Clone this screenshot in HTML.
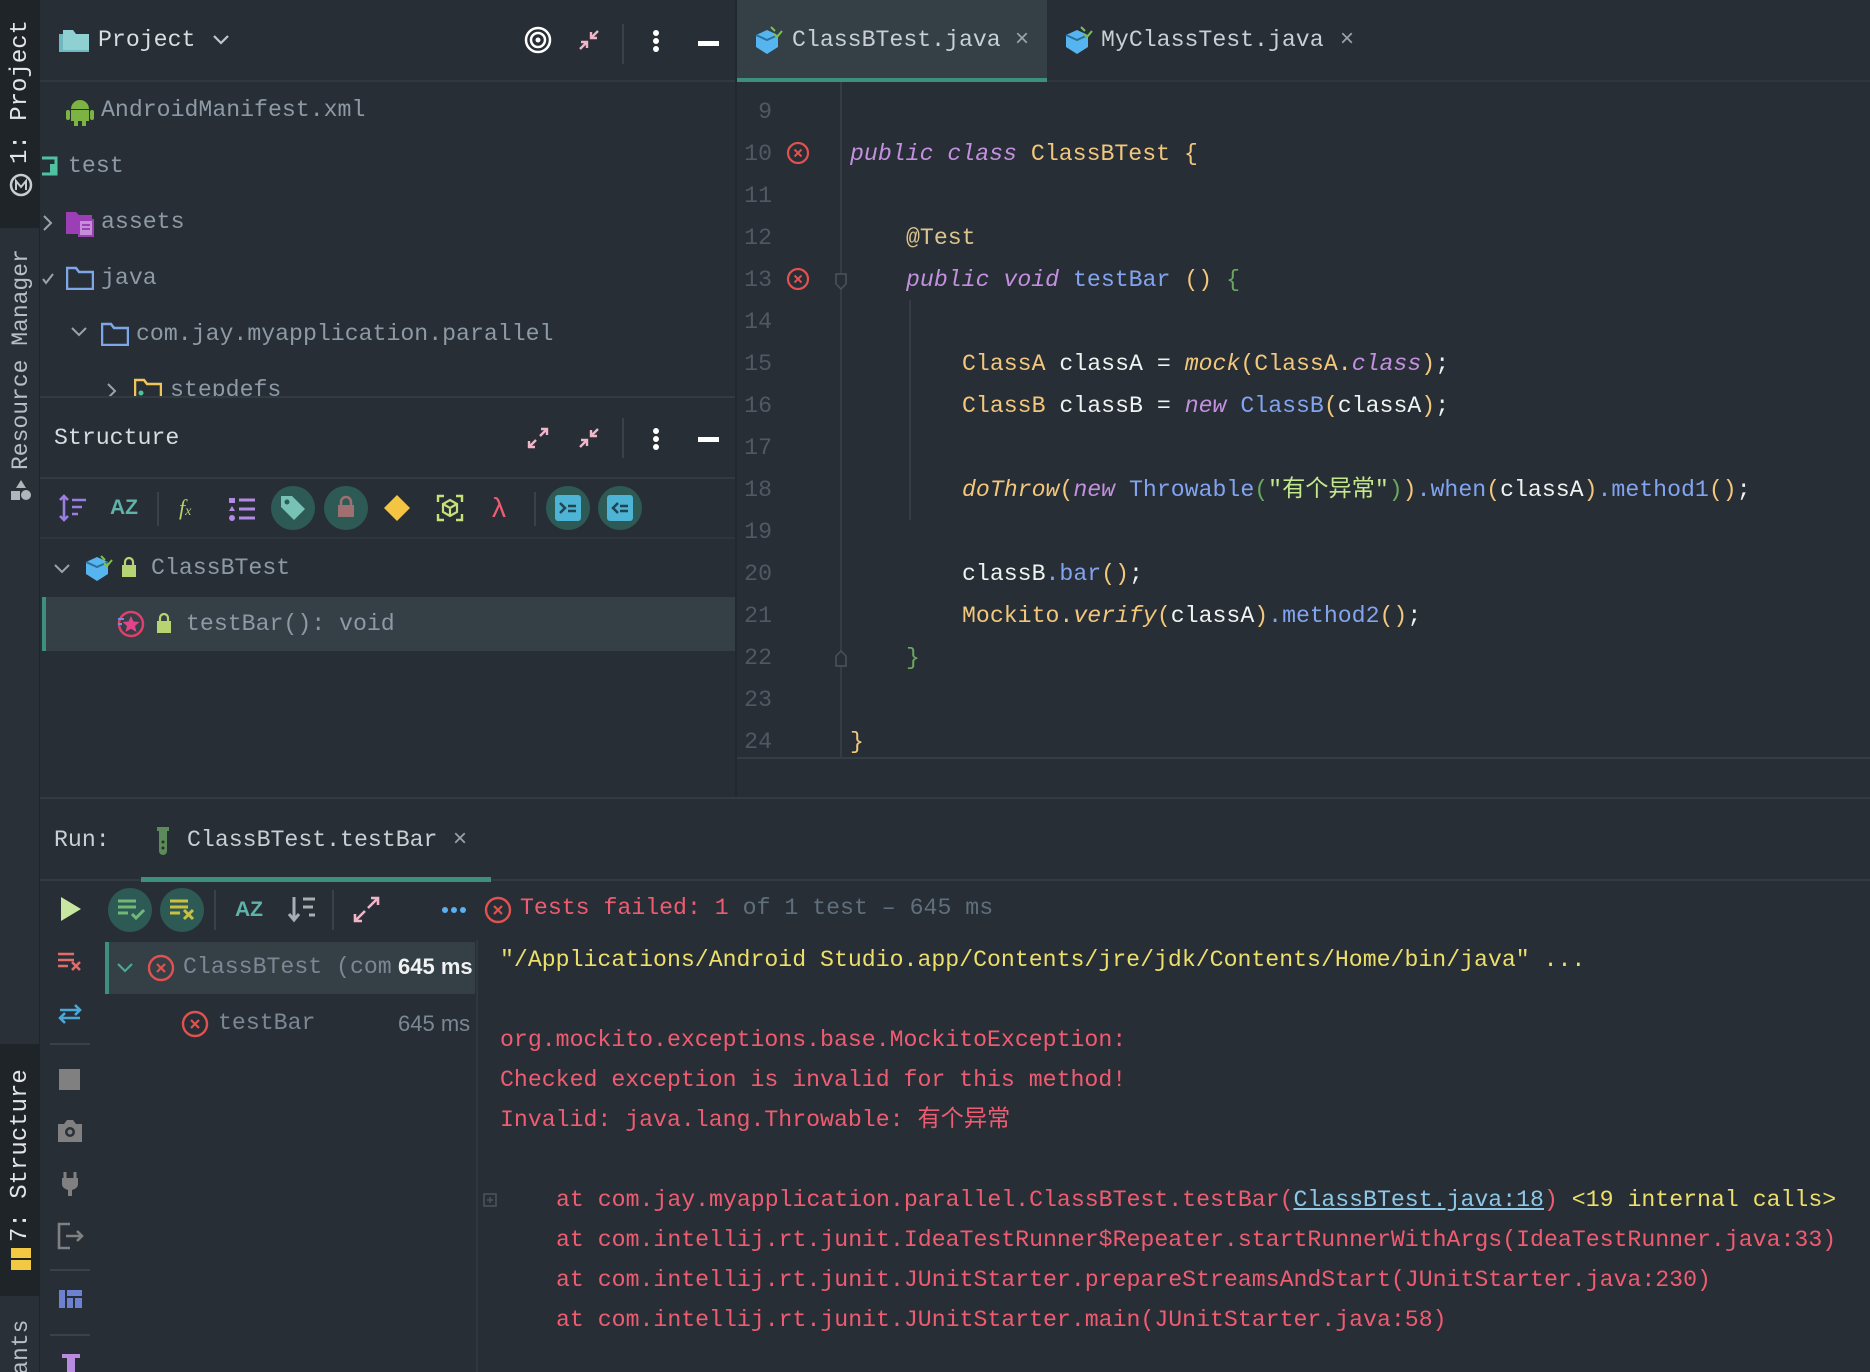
<!DOCTYPE html>
<html style="overflow:hidden;width:1870px;height:1372px"><head><meta charset="utf-8">
<style>
*{margin:0;padding:0;box-sizing:border-box}
body{width:1870px;height:1372px;background:#282e35;overflow:hidden;position:relative;font-family:"Liberation Mono","Noto Sans CJK SC",monospace;font-size:23.2px;color:#8d9aa5}
.a{position:absolute;white-space:pre;line-height:1}
.c{letter-spacing:0}
.vt{position:absolute;writing-mode:vertical-rl;transform:rotate(180deg);font-family:"Liberation Mono",monospace;font-size:23px;color:#c8cdd2;white-space:pre}
.ln{position:absolute;left:740px;width:32px;text-align:right;color:#4f5964;line-height:1}
.k{color:#c390e0;font-style:italic}
.y{color:#f2c77c}
.b{color:#82a4f0}
.w{color:#eef2f0}
.g{color:#6aa860}
.s{color:#c3e88d}
.r{color:#ef5c72}
.cy{color:#ecdf6a}
.gr{color:#5f6f7c}
</style></head><body>

<!-- left strip -->
<div style="position:absolute;left:0;top:0;width:40px;height:1372px;background:#2a3038;border-right:1px solid #20252b"></div>
<div style="position:absolute;left:0;top:0;width:40px;height:228px;background:#1f2429"></div>
<div class="vt" style="left:7px;top:18px;height:146px;font-size:24px;color:#e2e6ea">1: Project</div>
<svg class="a" style="left:8px;top:172px" width="26" height="26"><circle cx="13" cy="13" r="10" fill="none" stroke="#c8cdd2" stroke-width="2.5"/><path d="M8 18V9l5 6 5-6v9" fill="none" stroke="#c8cdd2" stroke-width="2"/></svg>
<div class="vt" style="left:8px;top:244px;height:226px;color:#b7bec5">Resource Manager</div>
<svg class="a" style="left:9px;top:478px" width="24" height="24"><path d="M12 2l5 8H7z" fill="#b0b6bc"/><rect x="2" y="13" width="9" height="9" fill="#b0b6bc"/><circle cx="17" cy="17" r="5" fill="#b0b6bc"/></svg>
<div style="position:absolute;left:0;top:1044px;width:40px;height:252px;background:#1f2429"></div>
<div class="vt" style="left:7px;top:1066px;height:176px;font-size:24px;color:#e2e6ea">7: Structure</div>
<div style="position:absolute;left:11px;top:1248px;width:20px;height:10px;background:#f3c842"></div>
<div style="position:absolute;left:11px;top:1260px;width:20px;height:10px;background:#f3c842"></div>
<div style="position:absolute;left:0;top:1310px;width:40px;height:62px;overflow:hidden">
<div class="vt" style="left:8px;top:8px;height:112px;color:#b7bec5">Variants</div></div>

<!-- project header -->
<div style="position:absolute;left:40px;top:80px;width:696px;height:2px;background:#303840"></div>
<svg class="a" style="left:57px;top:26px" width="34" height="28"><path d="M2 8h30v18H2z" fill="#6fb8bd"/><path d="M6 4h10l3 4h13v16H6z" fill="#8fd0d2"/></svg>
<div class="a" style="left:98px;top:29px;color:#d8dde2">Project</div>
<svg class="a" style="left:212px;top:34px" width="18" height="12"><path d="M2 2l7 7 7-7" fill="none" stroke="#c0c6cc" stroke-width="2.2"/></svg>
<svg class="a" style="left:524px;top:26px" width="28" height="28"><circle cx="14" cy="14" r="12" fill="none" stroke="#fff" stroke-width="2.5"/><circle cx="14" cy="14" r="7" fill="none" stroke="#fff" stroke-width="2.5"/><circle cx="14" cy="14" r="2.5" fill="#fff"/></svg>
<svg class="a" style="left:577px;top:28px" width="24" height="24"><path d="M14 10l7-7M14 4v6h6M10 14l-7 7M4 14h6v6" fill="none" stroke="#f0b5c8" stroke-width="2.4"/></svg>
<div style="position:absolute;left:622px;top:24px;width:2px;height:40px;background:#3a4249"></div>
<div style="position:absolute;left:653px;top:30px;width:6px;height:6px;border-radius:3px;background:#fff;box-shadow:0 8px 0 #fff,0 16px 0 #fff"></div>
<div style="position:absolute;left:698px;top:41px;width:21px;height:5px;background:#fff"></div>

<!-- project tree -->
<svg class="a" style="left:66px;top:96px" width="28" height="30"><path d="M5 13a9 9 0 0 1 18 0z" fill="#7cb342"/><rect x="5" y="14" width="18" height="11" fill="#7cb342"/><rect x="0" y="14" width="4" height="10" rx="2" fill="#7cb342"/><rect x="24" y="14" width="4" height="10" rx="2" fill="#7cb342"/><rect x="8" y="24" width="4" height="6" fill="#7cb342"/><rect x="16" y="24" width="4" height="6" fill="#7cb342"/></svg>
<div class="a" style="left:101px;top:99px">AndroidManifest.xml</div>
<svg class="a" style="left:40px;top:154px" width="20" height="26"><path d="M2 4h14v16H2" fill="none" stroke="#4fc3a1" stroke-width="3"/><rect x="10" y="10" width="6" height="10" fill="#4fc3a1"/></svg>
<div class="a" style="left:68px;top:155px">test</div>
<svg class="a" style="left:42px;top:214px" width="12" height="18"><path d="M2 2l7 7-7 7" fill="none" stroke="#9aa4ad" stroke-width="2"/></svg>
<svg class="a" style="left:66px;top:210px" width="30" height="28"><path d="M0 2h10l3 3h13v19H0z" fill="#9c3fb6"/><rect x="13" y="10" width="14" height="16" fill="#c58fd8" stroke="#9c3fb6" stroke-width="2"/><path d="M16 15h8M16 19h8" stroke="#9c3fb6" stroke-width="2"/></svg>
<div class="a" style="left:101px;top:211px">assets</div>
<svg class="a" style="left:41px;top:272px" width="14" height="14"><path d="M2 7l3 4 7-9" fill="none" stroke="#9aa4ad" stroke-width="2"/></svg>
<svg class="a" style="left:66px;top:266px" width="28" height="24"><path d="M1 2h9l3 4h14v17H1z" fill="none" stroke="#7ea7e8" stroke-width="2.5"/></svg>
<div class="a" style="left:101px;top:267px">java</div>
<svg class="a" style="left:70px;top:326px" width="18" height="12"><path d="M2 2l7 7 7-7" fill="none" stroke="#9aa4ad" stroke-width="2"/></svg>
<svg class="a" style="left:101px;top:322px" width="28" height="24"><path d="M1 2h9l3 4h14v17H1z" fill="none" stroke="#7ea7e8" stroke-width="2.5"/></svg>
<div class="a" style="left:136px;top:323px">com.jay.myapplication.parallel</div>
<div style="position:absolute;left:40px;top:370px;width:696px;height:27px;overflow:hidden">
<svg class="a" style="left:66px;top:12px" width="12" height="18"><path d="M2 2l7 7-7 7" fill="none" stroke="#9aa4ad" stroke-width="2"/></svg>
<svg class="a" style="left:94px;top:8px" width="28" height="24"><path d="M1 2h9l3 4h14v17H1z" fill="none" stroke="#f3c45a" stroke-width="2.5"/><circle cx="7" cy="15" r="2.5" fill="#4fc3a1"/></svg>
<div class="a" style="left:130px;top:9px">stepdefs</div>
</div>
<div style="position:absolute;left:40px;top:396px;width:696px;height:2px;background:#323a42"></div>

<!-- structure header -->
<div class="a" style="left:54px;top:427px;color:#d8dde2">Structure</div>
<svg class="a" style="left:526px;top:426px" width="24" height="24"><path d="M14 10l7-7M15 3h6v6M10 14l-7 7M3 15v6h6" fill="none" stroke="#f0b5c8" stroke-width="2.4"/></svg>
<svg class="a" style="left:577px;top:426px" width="24" height="24"><path d="M14 10l7-7M14 4v6h6M10 14l-7 7M4 14h6v6" fill="none" stroke="#f0b5c8" stroke-width="2.4"/></svg>
<div style="position:absolute;left:622px;top:418px;width:2px;height:40px;background:#3a4249"></div>
<div style="position:absolute;left:653px;top:428px;width:6px;height:6px;border-radius:3px;background:#fff;box-shadow:0 8px 0 #fff,0 16px 0 #fff"></div>
<div style="position:absolute;left:698px;top:437px;width:21px;height:5px;background:#fff"></div>
<div style="position:absolute;left:40px;top:477px;width:696px;height:2px;background:#323a42"></div>

<!-- structure toolbar -->
<svg class="a" style="left:58px;top:494px" width="30" height="28"><path d="M6 2v24M2 6l4-4 4 4M2 22l4 4 4-4M14 6h14M14 13h10M14 20h6" fill="none" stroke="#9a7ee0" stroke-width="2.6"/></svg>
<div class="a" style="left:110px;top:497px;color:#5fb3a8;font-family:'Liberation Sans',sans-serif;font-weight:bold;font-size:21px">AZ</div>
<div style="position:absolute;left:157px;top:492px;width:2px;height:34px;background:#3a4249"></div>
<div class="a" style="left:179px;top:497px;color:#b9cf6a;font-style:italic;font-family:'Liberation Serif',serif;font-size:22px">f<span style="font-size:14px">x</span></div>
<svg class="a" style="left:228px;top:496px" width="28" height="26"><rect x="1" y="2" width="6" height="5" fill="#b28ae6"/><path d="M4 10l3 5H1z" fill="#b28ae6"/><circle cx="4" cy="22" r="3" fill="#b28ae6"/><path d="M11 4h16M11 13h16M11 22h16" stroke="#b28ae6" stroke-width="3"/></svg>
<div style="position:absolute;left:271px;top:486px;width:44px;height:44px;border-radius:22px;background:#2e5a55"></div>
<svg class="a" style="left:279px;top:494px" width="28" height="28"><path d="M2 2h11l13 13-11 11L2 13z" fill="#77c2b5"/><circle cx="8" cy="8" r="2.5" fill="#2e5a55"/></svg>
<div style="position:absolute;left:324px;top:486px;width:44px;height:44px;border-radius:22px;background:#2e5a55"></div>
<svg class="a" style="left:336px;top:495px" width="20" height="24"><path d="M5 10V7a5 5 0 0 1 10 0v3" fill="none" stroke="#a07070" stroke-width="2.5"/><rect x="2" y="10" width="16" height="12" fill="#a07070"/></svg>
<svg class="a" style="left:383px;top:494px" width="28" height="28"><path d="M14 1l13 13-13 13L1 14z" fill="#f4c542"/></svg>
<svg class="a" style="left:436px;top:494px" width="28" height="28"><path d="M2 8V2h6M20 2h6v6M26 20v6h-6M8 26H2v-6" fill="none" stroke="#c6e07a" stroke-width="2.4"/><path d="M14 6l7 4v8l-7 4-7-4v-8z M7 10l7 4 7-4M14 14v8" fill="none" stroke="#c6e07a" stroke-width="2.2"/></svg>
<div class="a" style="left:492px;top:494px;color:#ef5c72;font-family:'Liberation Sans',sans-serif;font-size:28px">λ</div>
<div style="position:absolute;left:534px;top:492px;width:2px;height:34px;background:#3a4249"></div>
<div style="position:absolute;left:546px;top:486px;width:44px;height:44px;border-radius:22px;background:#2e5a55"></div>
<svg class="a" style="left:555px;top:495px" width="26" height="26"><rect width="26" height="26" rx="3" fill="#4db4d6"/><path d="M5 8l5 5-5 5M13 11h8M13 16h8" fill="none" stroke="#1e4550" stroke-width="2.5"/></svg>
<div style="position:absolute;left:598px;top:486px;width:44px;height:44px;border-radius:22px;background:#2e5a55"></div>
<svg class="a" style="left:607px;top:495px" width="26" height="26"><rect width="26" height="26" rx="3" fill="#4db4d6"/><path d="M11 8l-5 5 5 5M13 11h8M13 16h8" fill="none" stroke="#1e4550" stroke-width="2.5"/></svg>
<div style="position:absolute;left:40px;top:537px;width:696px;height:2px;background:#2f363e"></div>

<!-- structure tree -->
<svg class="a" style="left:53px;top:563px" width="18" height="12"><path d="M2 2l7 7 7-7" fill="none" stroke="#9aa4ad" stroke-width="2"/></svg>
<svg class="a" style="left:85px;top:553px" width="28" height="30"><path d="M12 4l11 5v12l-11 7-11-7V9z" fill="#56b4ef"/><path d="M1 9l11 5 11-5" fill="none" stroke="#2b6f9a" stroke-width="2"/><path d="M16 3l4 4M19 10l3 3 5-6" fill="none" stroke="#7cc24a" stroke-width="2"/></svg>
<svg class="a" style="left:120px;top:556px" width="18" height="22"><path d="M5 9V6a4 4 0 0 1 8 0v3" fill="none" stroke="#b6d472" stroke-width="2.2"/><rect x="2" y="9" width="14" height="12" fill="#b6d472"/></svg>
<div class="a" style="left:151px;top:557px">ClassBTest</div>
<div style="position:absolute;left:42px;top:597px;width:694px;height:54px;background:#343f46;border-left:4px solid #3d8f80"></div>
<svg class="a" style="left:115px;top:609px" width="32" height="30"><circle cx="16" cy="15" r="12" fill="none" stroke="#e03e6b" stroke-width="2.5"/><path d="M16 7l2.5 5.5 6 .5-4.5 4 1.5 6-5.5-3.2-5.5 3.2 1.5-6-4.5-4 6-.5z" fill="#e0458a"/><path d="M3 10h6M3 15h4" stroke="#6a8fe0" stroke-width="2"/></svg>
<svg class="a" style="left:155px;top:612px" width="18" height="22"><path d="M5 9V6a4 4 0 0 1 8 0v3" fill="none" stroke="#b6d472" stroke-width="2.2"/><rect x="2" y="9" width="14" height="12" fill="#b6d472"/></svg>
<div class="a" style="left:186px;top:613px">testBar(): void</div>

<!-- panel border -->
<div style="position:absolute;left:735px;top:0;width:2px;height:798px;background:#222830"></div>

<!-- editor tabs -->
<div style="position:absolute;left:737px;top:0;width:310px;height:78px;background:#343f46"></div>
<div style="position:absolute;left:737px;top:78px;width:310px;height:4px;background:#3d8f80"></div>
<div style="position:absolute;left:1047px;top:80px;width:823px;height:2px;background:#2f363e"></div>
<svg class="a" style="left:755px;top:24px" width="30" height="32"><path d="M12 6l11 5v12l-11 7-11-7V11z" fill="#56b4ef"/><path d="M1 11l11 5 11-5" fill="none" stroke="#2b6f9a" stroke-width="2"/><path d="M16 3l4 4M19 10l3 3 5-6" fill="none" stroke="#7cc24a" stroke-width="2"/></svg>
<div class="a" style="left:792px;top:29px;color:#c8cfd5">ClassBTest.java</div>
<div class="a" style="left:1015px;top:27px;color:#9aa4ad;font-family:'Liberation Sans',sans-serif;font-size:24px">×</div>
<svg class="a" style="left:1065px;top:24px" width="30" height="32"><path d="M12 6l11 5v12l-11 7-11-7V11z" fill="#56b4ef"/><path d="M1 11l11 5 11-5" fill="none" stroke="#2b6f9a" stroke-width="2"/><path d="M16 3l4 4M19 10l3 3 5-6" fill="none" stroke="#7cc24a" stroke-width="2"/></svg>
<div class="a" style="left:1101px;top:29px;color:#c8cfd5">MyClassTest.java</div>
<div class="a" style="left:1340px;top:27px;color:#9aa4ad;font-family:'Liberation Sans',sans-serif;font-size:24px">×</div>

<!-- gutter -->
<div style="position:absolute;left:840px;top:82px;width:2px;height:676px;background:#343c44"></div>
<div style="position:absolute;left:909px;top:300px;width:2px;height:220px;background:#343c44"></div>
<div class="ln" style="top:101px">9</div>
<div class="ln" style="top:143px">10</div>
<div class="ln" style="top:185px">11</div>
<div class="ln" style="top:227px">12</div>
<div class="ln" style="top:269px">13</div>
<div class="ln" style="top:311px">14</div>
<div class="ln" style="top:353px">15</div>
<div class="ln" style="top:395px">16</div>
<div class="ln" style="top:437px">17</div>
<div class="ln" style="top:479px">18</div>
<div class="ln" style="top:521px">19</div>
<div class="ln" style="top:563px">20</div>
<div class="ln" style="top:605px">21</div>
<div class="ln" style="top:647px">22</div>
<div class="ln" style="top:689px">23</div>
<div class="ln" style="top:731px">24</div>
<svg class="a" style="left:785px;top:140px" width="26" height="26"><circle cx="13" cy="13" r="10" fill="none" stroke="#e0524f" stroke-width="2.2"/><path d="M9.5 9.5l7 7M16.5 9.5l-7 7" stroke="#e0524f" stroke-width="2"/></svg>
<svg class="a" style="left:785px;top:266px" width="26" height="26"><circle cx="13" cy="13" r="10" fill="none" stroke="#e0524f" stroke-width="2.2"/><path d="M9.5 9.5l7 7M16.5 9.5l-7 7" stroke="#e0524f" stroke-width="2"/></svg>
<svg class="a" style="left:834px;top:272px" width="14" height="20"><path d="M2 2h10v10l-5 5-5-5z" fill="#282e35" stroke="#4a535c" stroke-width="1.5"/></svg>
<svg class="a" style="left:834px;top:648px" width="14" height="20"><path d="M2 18h10V8L7 3 2 8z" fill="#282e35" stroke="#4a535c" stroke-width="1.5"/></svg>

<!-- code -->
<div class="a" style="left:850px;top:143px"><span class="k">public class</span> <span class="y">ClassBTest {</span></div>
<div class="a" style="left:906px;top:227px;color:#dcc48e">@Test</div>
<div class="a" style="left:906px;top:269px"><span class="k">public void</span> <span class="b">testBar</span> <span class="y">()</span> <span class="g">{</span></div>
<div class="a" style="left:962px;top:353px"><span class="y">ClassA</span> <span class="w">classA</span> <span class="w">=</span> <span class="y" style="font-style:italic">mock</span><span class="y">(ClassA.</span><span class="k">class</span><span class="y">)</span><span class="w">;</span></div>
<div class="a" style="left:962px;top:395px"><span class="y">ClassB</span> <span class="w">classB</span> <span class="w">=</span> <span class="k">new</span> <span class="b">ClassB</span><span class="y">(</span><span class="w">classA</span><span class="y">)</span><span class="w">;</span></div>
<div class="a" style="left:962px;top:479px"><span class="y" style="font-style:italic">doThrow</span><span class="y">(</span><span class="k">new</span> <span class="b">Throwable</span><span class="g">(</span><span class="s">"<span class="c">有个异常</span>"</span><span class="g">)</span><span class="y">)</span><span class="b">.when</span><span class="y">(</span><span class="w">classA</span><span class="y">)</span><span class="b">.method1</span><span class="y">()</span><span class="w">;</span></div>
<div class="a" style="left:962px;top:563px"><span class="w">classB</span><span class="b">.bar</span><span class="y">()</span><span class="w">;</span></div>
<div class="a" style="left:962px;top:605px"><span class="y">Mockito.</span><span class="y" style="font-style:italic">verify</span><span class="y">(</span><span class="w">classA</span><span class="y">)</span><span class="b">.method2</span><span class="y">()</span><span class="w">;</span></div>
<div class="a" style="left:906px;top:647px"><span class="g">}</span></div>
<div class="a" style="left:850px;top:731px"><span class="y">}</span></div>

<div style="position:absolute;left:737px;top:757px;width:1133px;height:2px;background:#343c44"></div>
<div style="position:absolute;left:40px;top:797px;width:1830px;height:2px;background:#323a42"></div>

<!-- run header -->
<div class="a" style="left:54px;top:829px;color:#c8cfd5">Run:</div>
<svg class="a" style="left:155px;top:826px" width="16" height="30"><rect x="2" y="1" width="12" height="4" fill="#5c8a5a"/><path d="M4 5h8v20a4 4 0 0 1-8 0z" fill="#5c8a5a"/><circle cx="8" cy="16" r="1.5" fill="#28302a"/><circle cx="8" cy="22" r="1.5" fill="#28302a"/></svg>
<div class="a" style="left:187px;top:829px;color:#c8cfd5">ClassBTest.testBar</div>
<div class="a" style="left:453px;top:827px;color:#9aa4ad;font-family:'Liberation Sans',sans-serif;font-size:24px">×</div>
<div style="position:absolute;left:40px;top:879px;width:1830px;height:2px;background:#323a42"></div>
<div style="position:absolute;left:141px;top:877px;width:350px;height:5px;background:#3d8f80"></div>

<!-- run toolbar -->
<svg class="a" style="left:60px;top:896px" width="22" height="26"><path d="M1 1l20 12L1 25z" fill="#c8e6a0"/></svg>
<div style="position:absolute;left:108px;top:888px;width:44px;height:44px;border-radius:22px;background:#2e5a55"></div>
<svg class="a" style="left:116px;top:897px" width="30" height="26"><path d="M2 4h18M2 10h18M2 16h10" stroke="#70b878" stroke-width="3"/><path d="M16 17l4 4 8-8" fill="none" stroke="#70b878" stroke-width="3"/></svg>
<div style="position:absolute;left:160px;top:888px;width:44px;height:44px;border-radius:22px;background:#2e5a55"></div>
<svg class="a" style="left:168px;top:897px" width="30" height="26"><path d="M2 4h18M2 10h18M2 16h10" stroke="#c9c040" stroke-width="3"/><path d="M16 13l9 9M25 13l-9 9" stroke="#c9c040" stroke-width="3"/></svg>
<div style="position:absolute;left:214px;top:890px;width:2px;height:40px;background:#3a4249"></div>
<div class="a" style="left:235px;top:899px;color:#5fb3a8;font-family:'Liberation Sans',sans-serif;font-weight:bold;font-size:21px">AZ</div>
<svg class="a" style="left:287px;top:895px" width="30" height="30"><path d="M7 2v22M2 19l5 6 5-6" fill="none" stroke="#a8aeb4" stroke-width="3"/><path d="M16 4h12M16 12h10M22 20h6" stroke="#a8aeb4" stroke-width="3"/></svg>
<div style="position:absolute;left:332px;top:890px;width:2px;height:40px;background:#3a4249"></div>
<svg class="a" style="left:353px;top:896px" width="28" height="28"><path d="M15 12l10-10M18 2h7v7M12 15L2 25M2 18v7h7" fill="none" stroke="#f0b5c8" stroke-width="2.6"/></svg>
<div style="position:absolute;left:442px;top:907px;width:6px;height:6px;border-radius:3px;background:#5ab0f0;box-shadow:9px 0 0 #5ab0f0,18px 0 0 #5ab0f0"></div>
<svg class="a" style="left:484px;top:896px" width="28" height="28"><circle cx="14" cy="14" r="12" fill="none" stroke="#e0524f" stroke-width="2.4"/><path d="M10 10l8 8M18 10l-8 8" stroke="#e0524f" stroke-width="2.2"/></svg>
<div class="a" style="left:520px;top:897px"><span class="r">Tests failed: 1</span><span class="gr"> of 1 test – 645 ms</span></div>

<!-- run side toolbar -->
<svg class="a" style="left:56px;top:950px" width="28" height="24"><path d="M2 4h16M2 10h16M2 16h10" stroke="#e06c6c" stroke-width="2.6"/><path d="M16 12l8 8M24 12l-8 8" stroke="#e06c6c" stroke-width="2.6"/></svg>
<svg class="a" style="left:56px;top:1003px" width="28" height="22"><path d="M4 7h20M19 2l5 5-5 5M24 15H4M9 10l-5 5 5 5" fill="none" stroke="#4aa8d8" stroke-width="2.6"/></svg>
<div style="position:absolute;left:50px;top:1043px;width:40px;height:2px;background:#3a4249"></div>
<div style="position:absolute;left:59px;top:1069px;width:21px;height:21px;background:#808080"></div>
<svg class="a" style="left:56px;top:1118px" width="28" height="26"><path d="M2 6h6l3-4h6l3 4h6v18H2z" fill="#808080"/><circle cx="14" cy="14" r="5" fill="#2a3038"/><circle cx="14" cy="14" r="2.5" fill="#808080"/></svg>
<svg class="a" style="left:60px;top:1171px" width="20" height="26"><path d="M5 1v6M15 1v6" stroke="#808080" stroke-width="3"/><path d="M2 7h16v6a8 6 0 0 1-6 6v6h-4v-6a8 6 0 0 1-6-6z" fill="#808080"/></svg>
<svg class="a" style="left:56px;top:1222px" width="30" height="28"><path d="M14 2H3v24h11" fill="none" stroke="#808080" stroke-width="2.6"/><path d="M10 14h16M21 9l5 5-5 5" fill="none" stroke="#808080" stroke-width="2.6"/></svg>
<div style="position:absolute;left:50px;top:1269px;width:40px;height:2px;background:#3a4249"></div>
<svg class="a" style="left:59px;top:1290px" width="24" height="20"><rect x="0" y="0" width="6" height="18" fill="#6e80d0"/><rect x="8" y="0" width="15" height="6" fill="#6e80d0"/><rect x="8" y="8" width="6" height="10" fill="#6e80d0"/><rect x="16" y="8" width="7" height="10" fill="#6e80d0"/></svg>
<div style="position:absolute;left:50px;top:1334px;width:40px;height:2px;background:#3a4249"></div>
<svg class="a" style="left:62px;top:1354px" width="18" height="18"><rect x="0" y="0" width="18" height="4" fill="#b88ae0"/><rect x="5" y="4" width="8" height="14" fill="#b88ae0"/></svg>

<!-- test tree -->
<div style="position:absolute;left:105px;top:942px;width:370px;height:52px;background:#343f46;border-left:4px solid #3d8f80"></div>
<svg class="a" style="left:116px;top:962px" width="18" height="12"><path d="M2 2l7 7 7-7" fill="none" stroke="#4aa890" stroke-width="2.2"/></svg>
<svg class="a" style="left:147px;top:954px" width="28" height="28"><circle cx="14" cy="14" r="12" fill="none" stroke="#e0524f" stroke-width="2.4"/><path d="M10 10l8 8M18 10l-8 8" stroke="#e0524f" stroke-width="2.2"/></svg>
<div style="position:absolute;left:180px;top:948px;width:212px;height:40px;overflow:hidden"><div class="a" style="left:3px;top:8px;color:#7b8894">ClassBTest (com</div></div>
<div class="a" style="left:398px;top:956px;color:#f0f2f4;font-family:'Liberation Sans',sans-serif;font-size:22px;font-weight:bold">645 ms</div>
<svg class="a" style="left:181px;top:1010px" width="28" height="28"><circle cx="14" cy="14" r="12" fill="none" stroke="#e0524f" stroke-width="2.4"/><path d="M10 10l8 8M18 10l-8 8" stroke="#e0524f" stroke-width="2.2"/></svg>
<div class="a" style="left:218px;top:1012px;color:#7b8894">testBar</div>
<div class="a" style="left:398px;top:1013px;color:#7b8894;font-family:'Liberation Sans',sans-serif;font-size:22px">645 ms</div>

<!-- console -->
<div style="position:absolute;left:476px;top:940px;width:2px;height:432px;background:#30373f"></div>
<div class="a cy" style="left:500px;top:949px">"/Applications/Android Studio.app/Contents/jre/jdk/Contents/Home/bin/java" ...</div>
<div class="a r" style="left:500px;top:1029px">org.mockito.exceptions.base.MockitoException:</div>
<div class="a r" style="left:500px;top:1069px">Checked exception is invalid for this method!</div>
<div class="a r" style="left:500px;top:1109px">Invalid: java.lang.Throwable: <span class="c">有个异常</span></div>
<svg class="a" style="left:483px;top:1193px" width="14" height="14"><rect x="1" y="1" width="12" height="12" fill="none" stroke="#4a535c" stroke-width="1.5"/><path d="M4 7h6M7 4v6" stroke="#4a535c" stroke-width="1.5"/></svg>
<div class="a r" style="left:556px;top:1189px">at com.jay.myapplication.parallel.ClassBTest.testBar(<span style="color:#8ec8e8;text-decoration:underline">ClassBTest.java:18</span>) <span class="cy">&lt;19 internal calls&gt;</span></div>
<div class="a r" style="left:556px;top:1229px">at com.intellij.rt.junit.IdeaTestRunner$Repeater.startRunnerWithArgs(IdeaTestRunner.java:33)</div>
<div class="a r" style="left:556px;top:1269px">at com.intellij.rt.junit.JUnitStarter.prepareStreamsAndStart(JUnitStarter.java:230)</div>
<div class="a r" style="left:556px;top:1309px">at com.intellij.rt.junit.JUnitStarter.main(JUnitStarter.java:58)</div>

</body></html>
